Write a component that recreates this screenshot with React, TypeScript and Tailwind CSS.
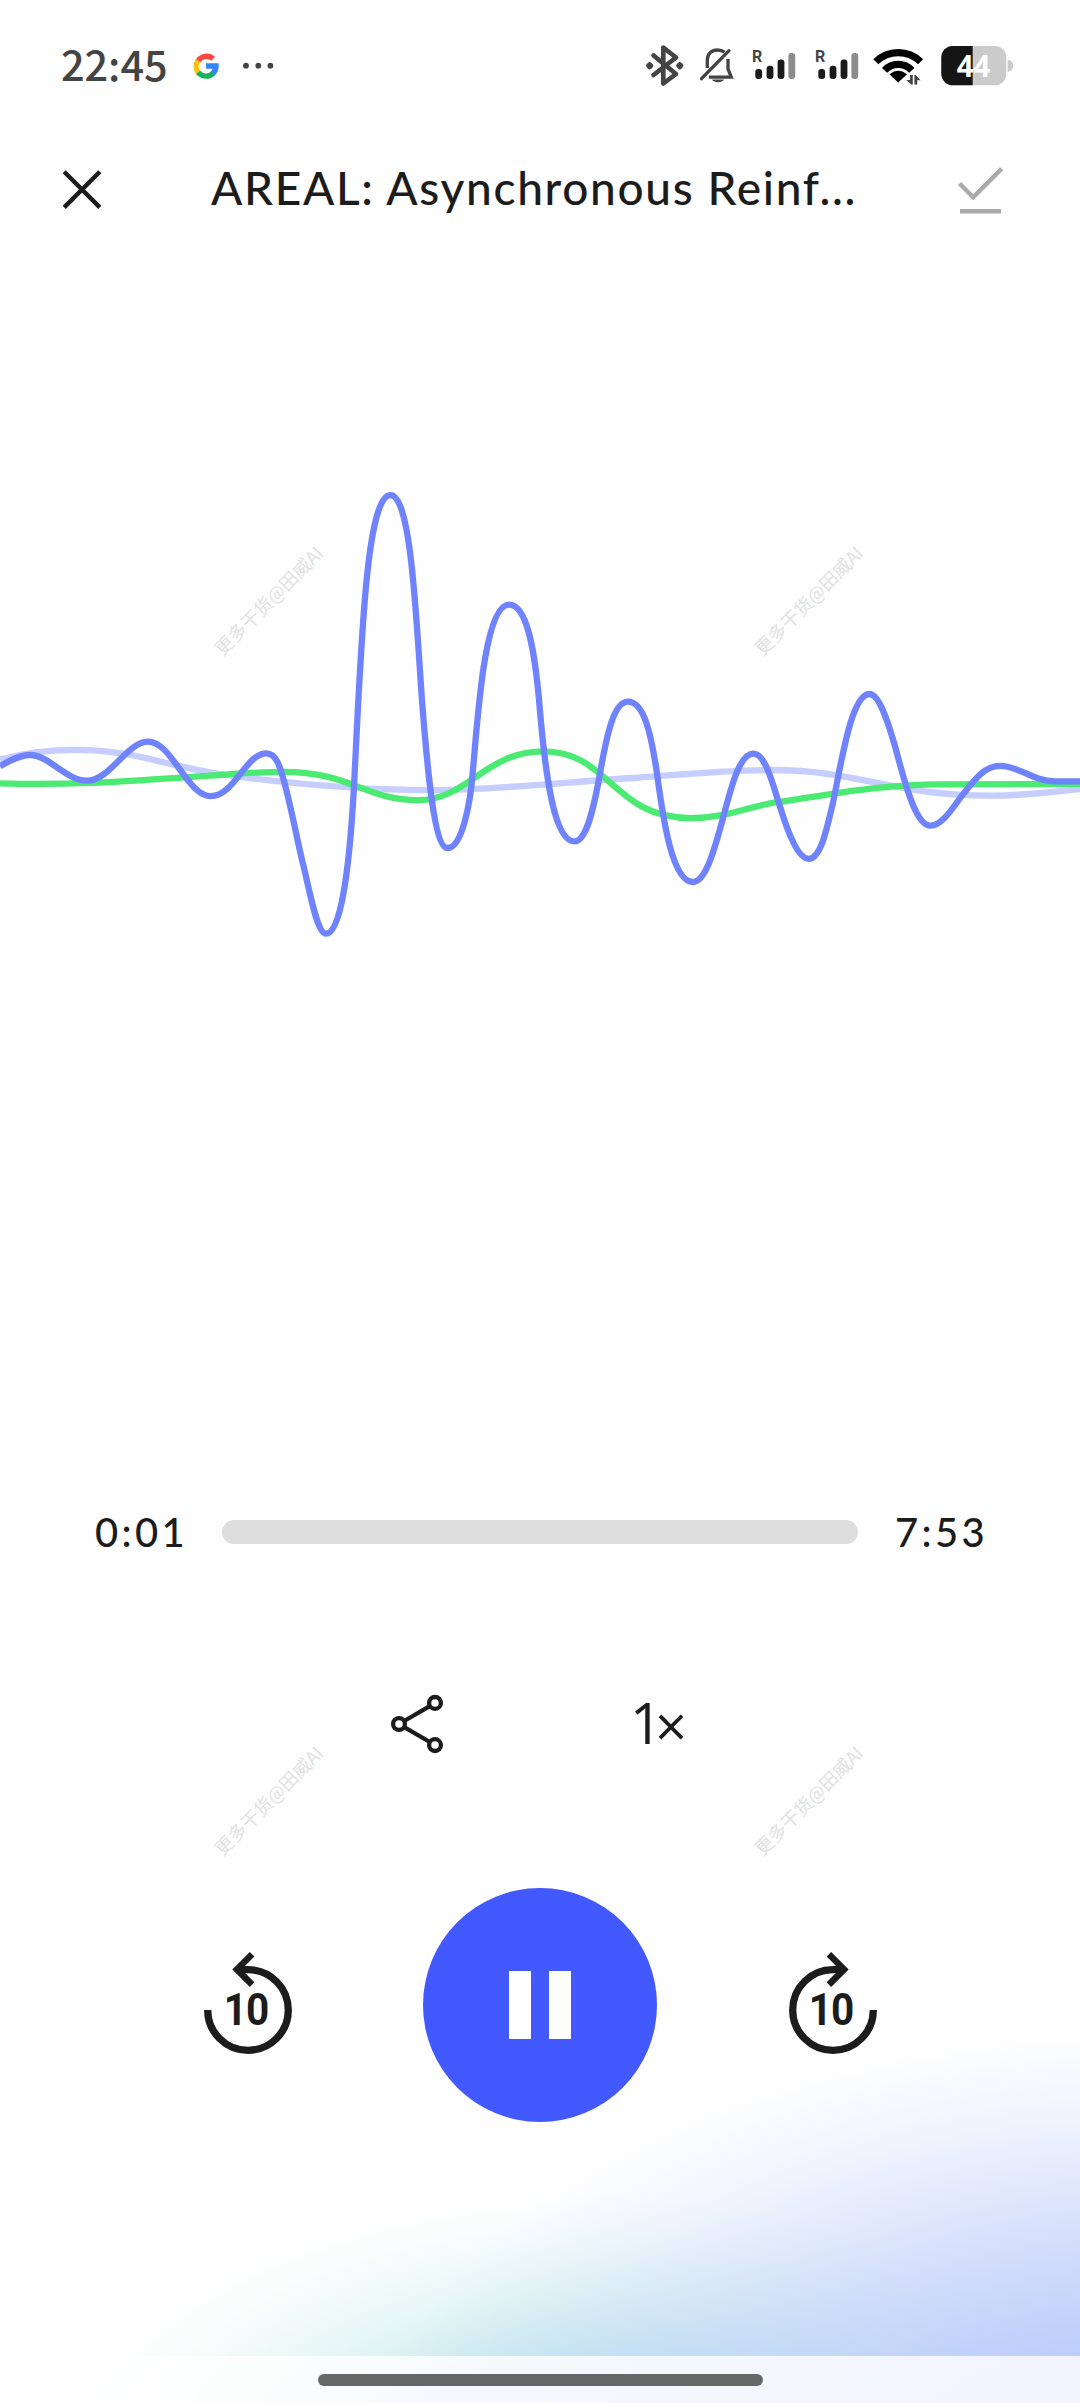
import React from "react";

const INK = "#1c1c1c";

function Signal() {
  return (
    <svg width="44" height="50" viewBox="752 40 44 50">
      <text x="752" y="61.5" fontSize="16" fontWeight="700" fill="#444" fontFamily="Roboto, sans-serif">R</text>
      <rect x="755.3" y="69" width="6.8" height="10" rx="3" fill="#1a1a1a" />
      <rect x="766.6" y="65.7" width="6.8" height="13.3" rx="3" fill="#1a1a1a" />
      <rect x="777.6" y="59.4" width="6.8" height="19.6" rx="3" fill="#1a1a1a" />
      <rect x="788.4" y="53" width="6.8" height="26" rx="3" fill="#8c8c8c" />
    </svg>
  );
}

function StatusBar() {
  return (
    <div className="flex h-[130px] shrink-0 items-start pt-10">
      <div className="-mt-[2px] ml-[61px] h-[50px] w-[132px] font-['Noto_Sans_CJK_SC',sans-serif] text-[41.5px] leading-[50px] font-medium tracking-[-0.1px] text-[#444]">
        22:45
      </div>
      <svg width="26" height="50" viewBox="193 40 26 50" fill="none" strokeWidth="5.4">
        <path d="M198.1 61 A10.2 10.2 0 0 1 213.2 58.6" stroke="#ff4641" />
        <path d="M198.6 73 A10.2 10.2 0 0 1 198.1 60.5" stroke="#fcc20e" />
        <path d="M213 73.4 A10.2 10.2 0 0 1 198.2 72.4" stroke="#18b45b" />
        <path d="M206 66 H216 A10.2 10.2 0 0 1 212.4 73.8" stroke="#3186ff" />
      </svg>
      <svg className="ml-6" width="32" height="50" viewBox="243 40 32 50" fill="#444">
        <circle cx="246" cy="65.7" r="2.9" />
        <circle cx="258.3" cy="65.7" r="2.9" />
        <circle cx="270.4" cy="65.7" r="2.9" />
      </svg>
      <svg className="ml-[369px]" width="42" height="50" viewBox="644 40 42 50" fill="none" stroke="#444" strokeWidth="4.6" strokeLinejoin="round" strokeLinecap="round">
        <path d="M653.5 55.5 L676 74 L663.3 83.5 V47.5 L676 57.5 L653.5 75" />
        <path d="M649.7 64.4 l1.3 1.3 l-1.3 1.3 l-1.3 -1.3z M679.8 64.4 l1.3 1.3 l-1.3 1.3 l-1.3 -1.3z" />
      </svg>
      <svg className="ml-3" width="38" height="50" viewBox="698 40 38 50" fill="none" stroke="#444" strokeWidth="3.3">
        <path d="M701.5 78.7 L729 50.7" strokeLinecap="round" />
        <path d="M707.3 68 V60 C707.3 53.5 712 50 717.5 50 C720.5 50 723 51 724.5 52.3" />
        <path d="M728 59 V69 L731.3 77.2 H709" />
        <path d="M712 79.6 h12 c-1.5 3.6 -10.5 3.6 -12 0z" fill="#444" stroke="none" />
      </svg>
      <div className="ml-4 flex gap-[19px]">
        <Signal />
        <Signal />
      </div>
      <svg className="ml-[13px]" width="54" height="50" viewBox="872 40 54 50" fill="none" stroke="#000" strokeWidth="7.2">
        <path d="M875.8 61.8 A32 32 0 0 1 920.6 61.8" />
        <path d="M884.6 70.4 A18.5 18.5 0 0 1 911.8 70.4" />
        <path d="M898.2 82.5 L889.5 74.3 Q898.2 67.4 907 74.3 Z" fill="#000" stroke="none" />
        <path d="M908 73.5 H921 V86 H906 V79Z" fill="#fefefe" stroke="none" />
        <path d="M910 75 h2.8 v9.5 h-1.5 l-5 -4.5 h3.7z M914.4 84.5 h2.8 v-4.2 h3.3 l-4.7 -5.3 h-1.4z" fill="#444" stroke="none" />
      </svg>
      <div className="relative ml-[15px] h-[50px] w-[73px]">
        <svg width="73" height="50" viewBox="941 40 73 50">
          <rect x="941.3" y="46" width="65" height="39.3" rx="11.5" fill="#cbcbcb" />
          <path d="M972.7 46 H952.8 A11.5 11.5 0 0 0 941.3 57.5 V73.8 A11.5 11.5 0 0 0 952.8 85.3 H972.7Z" fill="#151515" />
          <path d="M1007.7 59.7 C1015 60.5 1015 71 1007.7 71.8Z" fill="#cbcbcb" />
        </svg>
        <span className="absolute top-[6px] left-0 w-[65px] text-center font-['Noto_Sans',sans-serif] text-[29.5px] leading-[40px] font-bold text-white">44</span>
      </div>
    </div>
  );
}

function Header() {
  return (
    <header className="flex h-[120px] shrink-0 items-center">
      <svg className="ml-[60px]" width="44" height="44" viewBox="60 168 44 44" fill="none" stroke={INK} strokeWidth="4.4">
        <path d="M64.2 171.8 L99.8 207.4 M99.8 171.8 L64.2 207.4" />
      </svg>
      <h1 className="-mt-1 ml-[107px] w-[680px] font-['Lato',sans-serif] text-[46px] leading-[60px] font-medium tracking-[1.67px] whitespace-nowrap text-[#1c1c1c]">
        AREAL: Asynchronous Reinf...
      </h1>
      <svg className="ml-[64px]" width="52" height="52" viewBox="955 164 52 52" fill="none" stroke="#aaa" strokeWidth="4.4">
        <path d="M959.5 183.5 L973.2 197.2 L1001.7 168.8" />
        <path d="M960 211.2 H1001" />
      </svg>
    </header>
  );
}

function Wave() {
  return (
    <svg className="mt-[200px] shrink-0" width="1080" height="550" viewBox="0 450 1080 550" fill="none" strokeWidth="6.3">
      <path
        stroke="#c6cdff"
        d="M0 759.4 C25 752.7 50 749.8 76 749.8 C140 749.8 170 769.1 240 776.9 C310 785.6 370 790.1 430 790.1 C500 790.1 570 781.4 640 777.5 C690 773.6 730 770 772 770 C860 770 890 795.7 991 795.7 C1025 795.7 1050 792 1080 789.1"
      />
      <path
        stroke="#4bea73"
        d="M0 783.3 C70 785.6 120 781.7 206 775.9 C245 773.3 262 771.8 284 771.8 C350 771.8 365 800.1 418 800.1 C468 800.1 485 751.4 543 751.4 C610 751.4 612 818.1 691 818.1 C725 818.1 745 807.5 774 802.7 C830 794.9 880 784.3 940 784.3 L1080 784"
      />
      <path
        stroke="#7083ff"
        d="M0 766.2 C10 760.4 20 755 30 755 C49 755 66 780.7 87 780.7 C110 780.7 127 741.6 148 741.6 C172 741.6 187 796.2 211 796.2 C234 796.2 246 753.3 266.5 753.3 C276 753.3 280 766 284.5 783 C293 815 298 845 304.5 870 C312 903 318 933.7 326 933.7 C340 933.7 349 876.6 354 786.5 C361 649.1 366 495.2 390.5 495.2 C411 495.2 416 615.2 422 700.4 C427 765.2 434 848 447.5 848 C461 848 470 808.8 473 770.1 C478 712 485 604.6 509 604.6 C527 604.6 535 649.1 540 711 C546 781.4 555 841.4 574.4 841.4 C586 841.4 593 812.3 600 773.6 C607 733 614 701.7 628 701.7 C644 701.7 651 733 657 773.6 C663 818.1 672 882 693 882 C706 882 715 847.2 722.5 820.1 C731 788.1 739 753.7 753.5 753.7 C765 753.7 772 781.4 780 806.5 C788 832.7 798 858.8 808.6 858.8 C821 858.8 827 827.8 833 802.7 C841 764.9 851 694 869.5 694 C880 694 890 728 897 753.3 C908 795.9 918 825.7 930.5 825.7 C942 825.7 953 807.5 961 796.8 C974 780.4 984 765.9 1000 765.9 C1019 765.9 1033 781.4 1055 781.4 H1080"
      />
    </svg>
  );
}

function Progress() {
  return (
    <div className="mt-[502px] flex h-[60px] shrink-0 items-center font-['Lato',sans-serif] text-[40px] leading-[58px] font-medium tracking-[3.3px] text-[#1c1c1c]">
      <span className="-mt-px ml-[95px] w-[127px]">0:01</span>
      <div className="h-6 w-[636px] rounded-full bg-[#dedede]" />
      <span className="-mt-px ml-[37px]">7:53</span>
    </div>
  );
}

function Options() {
  return (
    <div className="mt-[122px] flex h-20 shrink-0 items-center">
      <svg className="ml-[388px]" width="60" height="66" viewBox="388 1691.3 60 66" fill="none" stroke={INK} strokeWidth="4.3">
        <circle cx="435" cy="1703.2" r="5.9" />
        <circle cx="399" cy="1724.3" r="5.9" />
        <circle cx="435" cy="1745.4" r="5.9" />
        <path d="M404.2 1721.3 L429.8 1706.4 M404.2 1727.4 L429.8 1742.3" />
      </svg>
      <div className="-mt-[5px] ml-[182px] font-['Open_Sans',sans-serif] text-[56px] leading-[80px] font-medium tracking-[-7px] text-[#1c1c1c]">
        1<span className="relative top-[3px]">×</span>
      </div>
    </div>
  );
}

function SkipArrow({ forward = false }: { forward?: boolean }) {
  return (
    <div className="relative h-[108px] w-[92px]">
      <svg className={forward ? "-scale-x-100" : ""} width="92" height="108" viewBox="201.7 1951 92 108" fill="none" stroke={INK} strokeWidth="7.3">
        <path d="M207.4 2010 A40.3 40.3 0 1 0 247.7 1969.7 H238" />
        <path d="M251.8 1954.2 L236.6 1969.4 L251.8 1984.6" strokeWidth="6.5" />
      </svg>
      <span
        className={
          forward
            ? "absolute top-[34px] left-0 w-[88px] scale-x-90 text-center font-['Roboto',sans-serif] text-[45px] leading-[50px] font-bold tracking-[-1px] text-[#1c1c1c]"
            : "absolute top-[34px] left-0 w-[88px] scale-x-90 text-center font-['Roboto',sans-serif] text-[45px] leading-[50px] font-bold tracking-[-1px] text-[#1c1c1c]"
        }
      >
        10
      </span>
    </div>
  );
}

function Controls() {
  return (
    <div className="mt-[123.5px] flex h-[235px] shrink-0 items-center justify-center gap-[129.5px]">
      <SkipArrow />
      <button className="flex size-[234px] items-center justify-center gap-[18.5px] rounded-full bg-[#4259ff]">
        <span className="h-[68px] w-[21.5px] bg-white" />
        <span className="h-[68px] w-[21.5px] bg-white" />
      </button>
      <SkipArrow forward />
    </div>
  );
}

function Watermark({ className }: { className: string }) {
  return (
    <div className={"pointer-events-none absolute w-[160px] -translate-x-1/2 -translate-y-1/2 -rotate-45 text-center font-['Noto_Sans_CJK_SC',sans-serif] text-[18.4px] leading-6 whitespace-nowrap text-[#e2e2e2] " + className}>
      更多干货@田威AI
    </div>
  );
}

export default function App() {
  return (
    <main className="relative flex h-[2403px] w-[1080px] flex-col overflow-hidden bg-[#fefefe] bg-[radial-gradient(780px_450px_at_1150px_2480px,#b5c8fa_0%,rgba(181,200,250,0.9)_29%,rgba(181,200,250,0.77)_40%,rgba(181,200,250,0.57)_55%,rgba(181,200,250,0.35)_70%,rgba(181,200,250,0.16)_84%,rgba(181,200,250,0)_100%),radial-gradient(535px_285px_at_600px_2480px,#cbeaf0_0%,#cbeaf0_43%,#e5f7f4_66%,#f6fcfb_85%,#fefefe_100%)]">
      <StatusBar />
      <Header />
      <Wave />
      <Progress />
      <Options />
      <Controls />
      <div className="mt-auto flex h-[47px] shrink-0 justify-center bg-white/80 pt-[18px]">
        <div className="h-3 w-[445px] rounded-full bg-[#666868]" />
      </div>
      <Watermark className="top-[600px] left-[268px]" />
      <Watermark className="top-[600px] left-[808px]" />
      <Watermark className="top-[1800px] left-[268px]" />
      <Watermark className="top-[1800px] left-[808px]" />
    </main>
  );
}
